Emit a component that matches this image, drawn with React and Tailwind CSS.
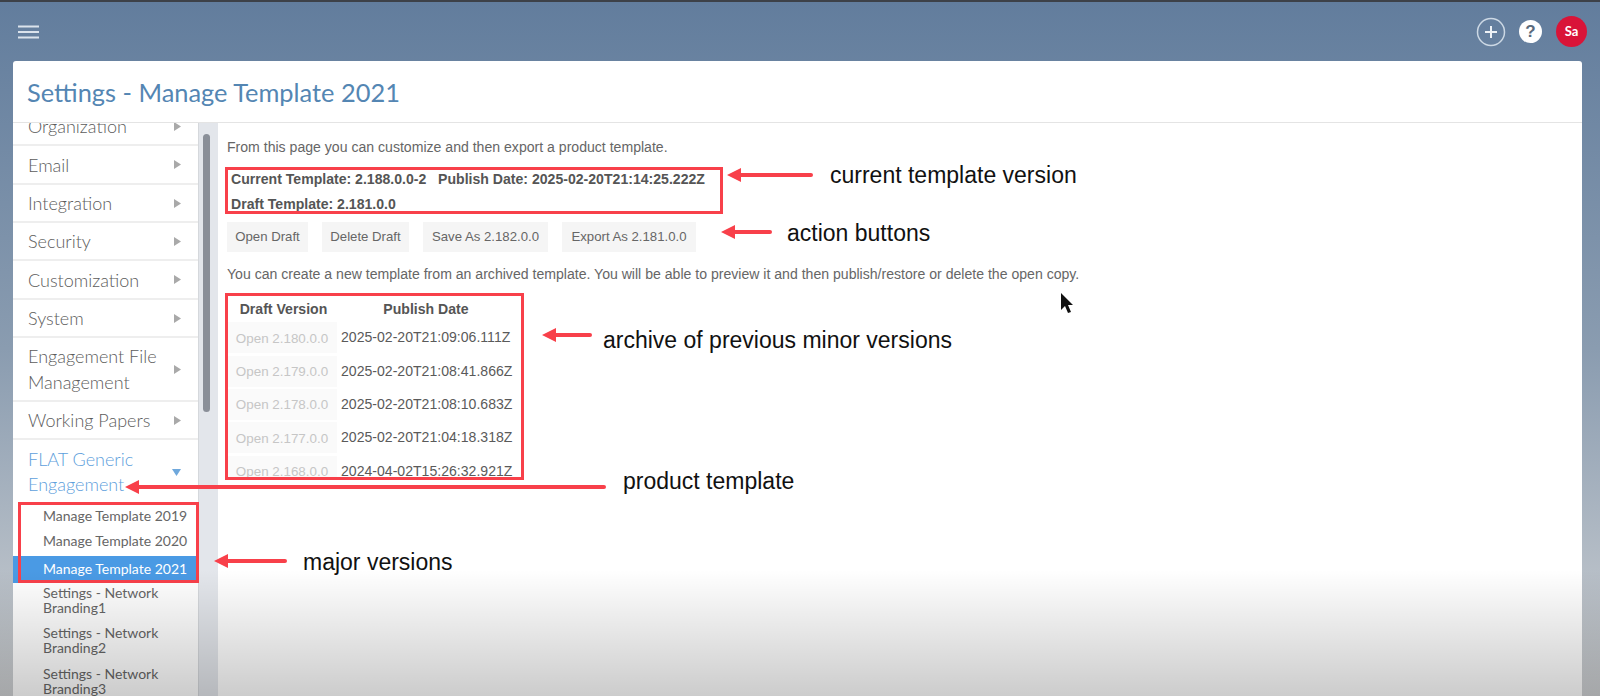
import React from 'react';

const sideItems = [
  { label: 'Organization', h: 'h-[38px]' },
  { label: 'Email', h: 'h-[39px]' },
  { label: 'Integration', h: 'h-[38px]' },
  { label: 'Security', h: 'h-[38px]' },
  { label: 'Customization', h: 'h-[39px]' },
  { label: 'System', h: 'h-[38px]' },
  { label: 'Engagement File Management', h: 'h-[64px]' },
  { label: 'Working Papers', h: 'h-[38px]' },
];

const archive = [
  ['Open 2.180.0.0', '2025-02-20T21:09:06.111Z'],
  ['Open 2.179.0.0', '2025-02-20T21:08:41.866Z'],
  ['Open 2.178.0.0', '2025-02-20T21:08:10.683Z'],
  ['Open 2.177.0.0', '2025-02-20T21:04:18.318Z'],
  ['Open 2.168.0.0', '2024-04-02T15:26:32.921Z'],
];

const arrows = [
  [811, 727, 175],
  [770, 721, 232],
  [590, 542, 335],
  [604, 125, 487],
  [285, 214, 561],
];

const Triangle = ({ color }) => (
  <svg width="9" height="11" viewBox="0 0 9 11" className="shrink-0">
    <path d="M1 1 L8 5.5 L1 10 Z" fill={color} />
  </svg>
);

const App = () => {
  return (
    <div className="relative h-[696px] w-[1600px] overflow-hidden flex flex-col bg-gradient-to-b from-[#627d9d] via-[#8a9cb0] to-[#cfd1d3] border-t-2 border-[#3d4148] font-['Liberation_Sans',sans-serif]">
      {/* top bar */}
      <div className="h-[59px] shrink-0 flex items-center justify-between pl-[18px] pr-[13px]">
        <svg width="21" height="14" viewBox="0 0 21 14">
          <path d="M0 1.5H21M0 7H21M0 12.5H21" stroke="#dbe3ec" strokeWidth="2" />
        </svg>
        <div className="flex items-center gap-[12px]">
          <svg width="30" height="30" viewBox="0 0 30 30">
            <circle cx="15" cy="15" r="13.5" fill="none" stroke="#ccd8e4" strokeWidth="1.5" />
            <path d="M15 9V21M9 15H21" stroke="#eef2f6" strokeWidth="2" />
          </svg>
          <div className="w-[23px] h-[23px] mx-[1px] rounded-full bg-white flex items-center justify-center text-[#5a6a7c] text-[17px] font-bold">?</div>
          <div className="w-[31px] h-[31px] ml-[1px] rounded-full bg-[#d91438] flex items-center justify-center text-white text-[13px] font-bold font-['Lato',sans-serif]">Sa</div>
        </div>
      </div>

      {/* card */}
      <div className="flex-1 min-h-0 ml-[13px] mr-[18px] bg-white rounded-t-[3px] flex flex-col">
        <div className="h-[62px] shrink-0 border-b border-[#e4e4e4] flex items-center pl-[14px] pt-[2px] font-['Lato',sans-serif] text-[25.4px] text-[#5486b3]">
          Settings - Manage Template 2021
        </div>

        <div className="flex-1 min-h-0 flex">
          {/* sidebar */}
          <div className="w-[186px] shrink-0 overflow-hidden border-r border-[#d5d8dc] font-['Lato',sans-serif]">
            <div className="-mt-[15px]">
              {sideItems.map((item) => (
                <div key={item.label} className={`${item.h} flex items-center justify-between pl-[15px] pr-[16px] border-b-2 border-[#eeeeee] text-[18px] font-light leading-[26px] text-[#5c5c5c]`}>
                  <span className="w-[145px]">{item.label}</span>
                  <Triangle color="#a9a9a9" />
                </div>
              ))}
              <div className="h-[62px] pt-[2px] flex items-center justify-between pl-[15px] pr-[16px] text-[18px] font-light leading-[25px] text-[#5ea0dc]">
                <span className="w-[120px]">FLAT Generic Engagement</span>
                <svg width="11" height="9" viewBox="0 0 11 9">
                  <path d="M1 1 L10 1 L5.5 8 Z" fill="#6fa8dc" />
                </svg>
              </div>
              <div className="pt-[1px] text-[14px] text-[#666666]">
                <div className="h-[25px] pl-[30px] flex items-center">Manage Template 2019</div>
                <div className="h-[28px] pb-[3px] pl-[30px] flex items-center">Manage Template 2020</div>
                <div className="h-[27px] pb-[2px] pl-[30px] flex items-center bg-[#4a9ae4] text-white">Manage Template 2021</div>
                <div className="pl-[30px] pt-[2px] leading-[15px] h-[40px]">Settings - Network Branding1</div>
                <div className="pl-[30px] pt-[2px] leading-[15px] h-[41px]">Settings - Network Branding2</div>
                <div className="pl-[30px] pt-[2px] leading-[15px] h-[40px]">Settings - Network Branding3</div>
              </div>
            </div>
          </div>

          {/* scroll gutter */}
          <div className="w-[19px] shrink-0 bg-[#e3e6eb] pl-[4px] pt-[11px]">
            <div className="w-[7px] h-[278px] rounded-full bg-[#8a8f98]" />
          </div>

          {/* main content */}
          <div className="flex-1 min-w-0 pl-[9px] pt-[16px] text-[14.08px] text-[#666666]">
            <p className="leading-[16px]">From this page you can customize and then export a product template.</p>
            <div className="mt-[12px] pl-[4px] font-bold text-[#555555]">
              <p className="leading-[25px]">Current Template: 2.188.0.0-2 &nbsp; Publish Date: 2025-02-20T21:14:25.222Z</p>
              <p className="leading-[25px]">Draft Template: 2.181.0.0</p>
            </div>
            <div className="mt-[5px] flex gap-[14px] text-[13.2px]">
              <button className="h-[30px] w-[81px] bg-[#f5f5f5]">Open Draft</button>
              <button className="h-[30px] w-[87px] bg-[#f5f5f5]">Delete Draft</button>
              <button className="h-[30px] w-[125px] bg-[#f5f5f5]">Save As 2.182.0.0</button>
              <button className="h-[30px] w-[134px] bg-[#f5f5f5]">Export As 2.181.0.0</button>
            </div>
            <p className="mt-[14px] leading-[16px]">You can create a new template from an archived template. You will be able to preview it and then publish/restore or delete the open copy.</p>

            <div className="mt-[16px] h-[181px] w-[296px] overflow-hidden">
              <div className="flex h-[23px] items-center font-bold text-[#555555]">
                <span className="w-[113px] text-center">Draft Version</span>
                <span className="w-[172px] text-center">Publish Date</span>
              </div>
              {archive.map(([open, date]) => (
                <div key={open} className="flex h-[33.4px] items-center">
                  <span className="w-[110px] h-[31px] pt-[2px] flex items-center justify-center bg-[#fafafa] text-[13.4px] text-[#c6c6c6]">{open}</span>
                  <span className="pl-[4px] text-[#5a5a5a]">{date}</span>
                </div>
              ))}
            </div>
          </div>
        </div>
      </div>

      {/* annotations over the screen */}
      <div className="absolute left-[225px] top-[165px] w-[498px] h-[47px] border-[3px] border-[#f8404a] pointer-events-none" />
      <div className="absolute left-[225px] top-[291px] w-[299px] h-[187px] border-[3px] border-[#f8404a] pointer-events-none" />
      <div className="absolute left-[18px] top-[500px] w-[181px] h-[81px] border-[3px] border-[#f8404a] pointer-events-none" />

      <svg className="absolute -top-[2px] left-0 pointer-events-none" width="1600" height="696" viewBox="0 0 1600 696">
        {arrows.map(([tail, tip, y]) => (
          <g key={tip}>
            <path d={`M${tail} ${y}L${tip + 12} ${y}`} stroke="#f8404a" strokeWidth="4" strokeLinecap="round" />
            <path d={`M${tip} ${y}L${tip + 14} ${y - 7}L${tip + 14} ${y + 7}Z`} fill="#f8404a" />
          </g>
        ))}
        <path d="M1061 293L1061 310L1065 306L1068 313L1071 312L1068 305L1073 305Z" fill="#111111" />
      </svg>

      <span className="absolute left-[830px] top-[161px] text-[23px] leading-[24px] text-[#111111]">current template version</span>
      <span className="absolute left-[787px] top-[219px] text-[23px] leading-[24px] text-[#111111]">action buttons</span>
      <span className="absolute left-[603px] top-[326px] text-[23px] leading-[24px] text-[#111111]">archive of previous minor versions</span>
      <span className="absolute left-[623px] top-[467px] text-[23px] leading-[24px] text-[#111111]">product template</span>
      <span className="absolute left-[303px] top-[548px] text-[23px] leading-[24px] text-[#111111]">major versions</span>

      {/* video fade at the bottom of the frame */}
      <div className="absolute left-0 right-0 bottom-0 h-[126px] bg-gradient-to-b from-transparent to-black/20 pointer-events-none" />
    </div>
  );
};

export default App;
